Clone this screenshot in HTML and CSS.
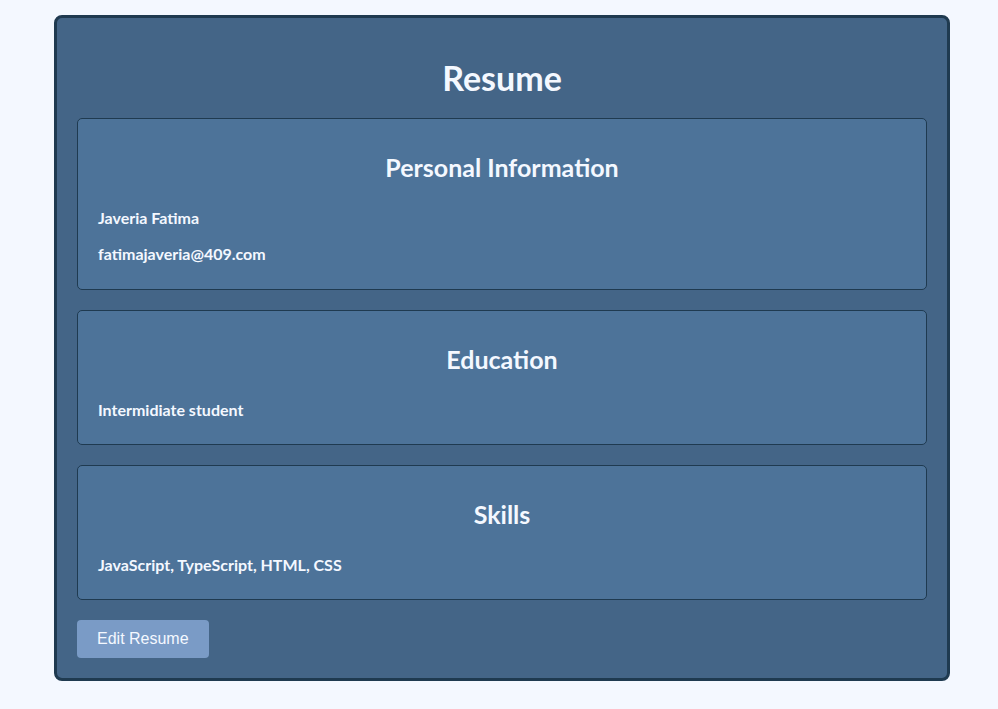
FILE: index.html
```html
<!DOCTYPE html>
<html lang="en">
<head>
<meta charset="utf-8">
<title>Resume</title>
<link rel="stylesheet" href="styles.css">
</head>
<body>
<div class="resume">
  <h1 class="title">Resume</h1>
  <section class="card">
    <h2 class="card-title">Personal Information</h2>
    <p class="line">Javeria Fatima</p>
    <p class="line">fatimajaveria@409.com</p>
  </section>
  <section class="card">
    <h2 class="card-title">Education</h2>
    <p class="line">Intermidiate student</p>
  </section>
  <section class="card">
    <h2 class="card-title">Skills</h2>
    <p class="line">JavaScript, TypeScript, HTML, CSS</p>
  </section>
  <button class="edit-btn" type="button">Edit Resume</button>
</div>
</body>
</html>
```

FILE: styles.css
```css
html, body {
  margin: 0;
  padding: 0;
  background: #f4f8ff;
}
body {
  padding-top: 15px;
  font-family: Lato, "Open Sans", sans-serif;
}
.resume {
  box-sizing: border-box;
  width: 896px;
  margin-left: 54px;
  padding: 20px;
  background: #446587;
  border: 3px solid #1f3a50;
  border-radius: 8px;
  color: #f4f8ff;
}
.title {
  margin: 20px 0;
  line-height: 40px;
  font-size: 34px;
  font-weight: 700;
  text-align: center;
}
.card {
  background: #4d7399;
  border: 1px solid #1f3a50;
  border-radius: 5px;
  padding: 10px 20px;
  margin-bottom: 20px;
}
.card-title {
  margin: 24px 0 26px;
  line-height: 29px;
  font-size: 25px;
  font-weight: 700;
  text-align: center;
}
.line {
  margin: 0;
  line-height: 20px;
  font-size: 16px;
  font-weight: 700;
}
.line + .line {
  margin-top: 16px;
}
.card .line:last-child {
  margin-bottom: 14px;
}
.card .line + .line:last-child {
  margin-bottom: 15px;
}
.edit-btn {
  display: block;
  height: 38px;
  padding: 0 20px;
  border: none;
  border-radius: 4px;
  background: #7a9bc6;
  color: #f4f8ff;
  font-family: "Liberation Sans", Arial, sans-serif;
  font-size: 16px;
  cursor: pointer;
}
```
